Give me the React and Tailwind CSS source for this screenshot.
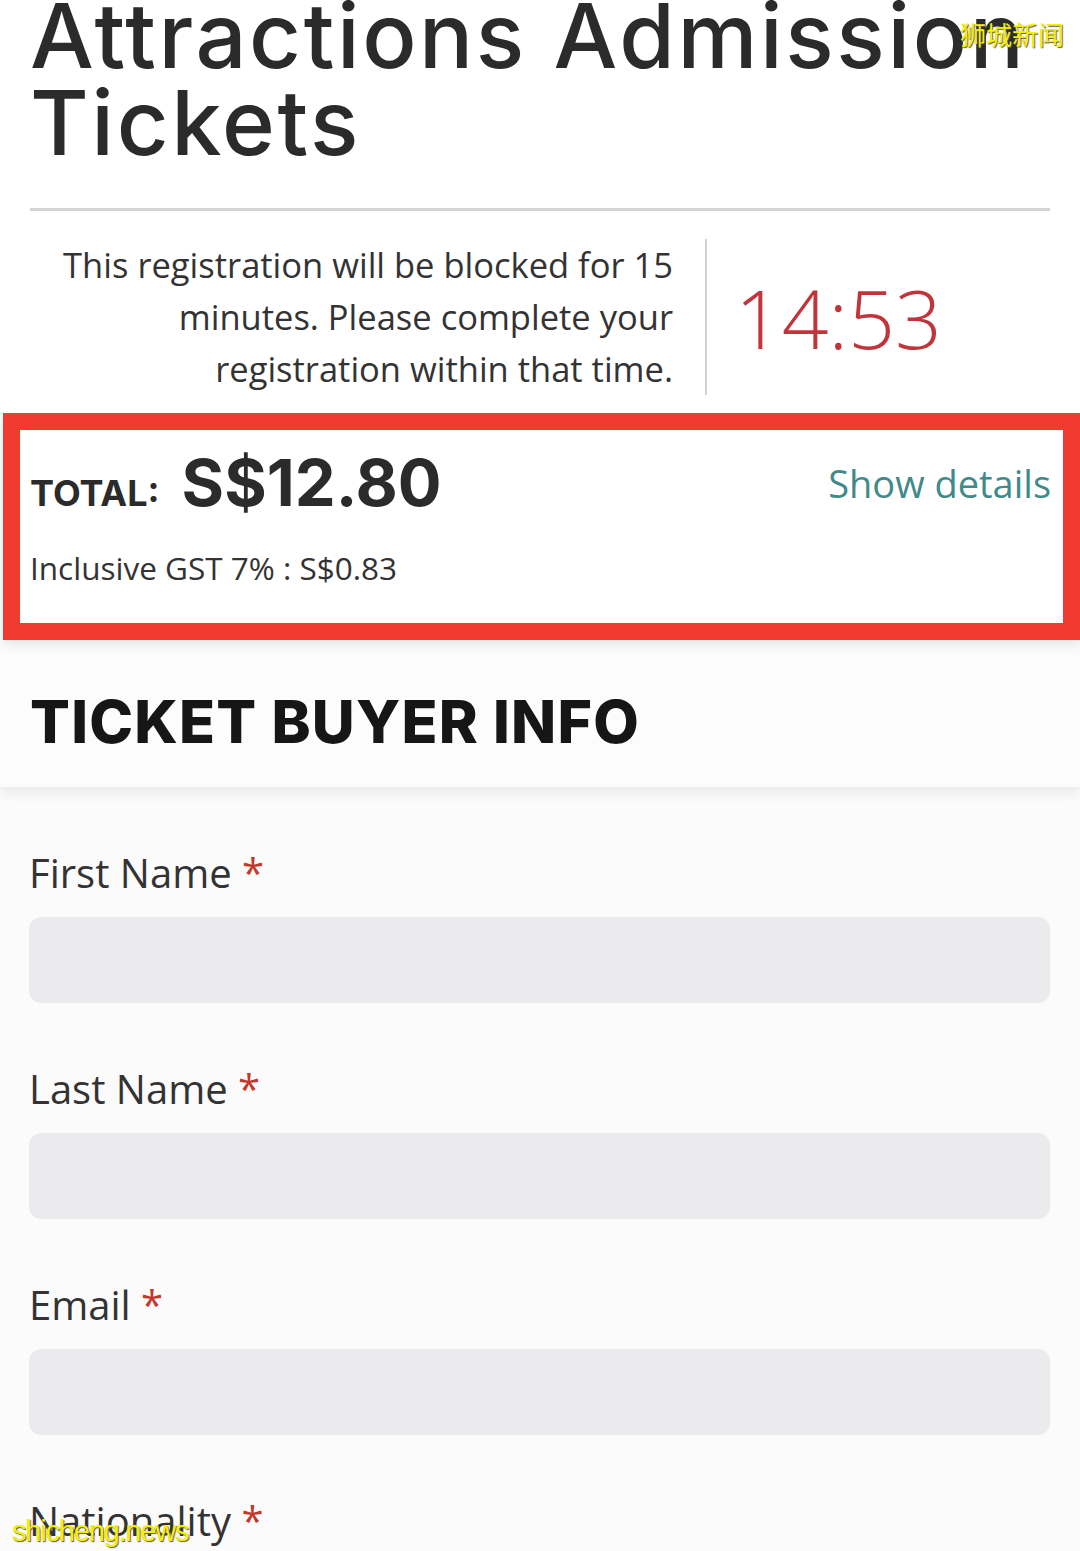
import React from 'react';

const heading = { fontFamily: 'Inter, "DejaVu Sans", sans-serif' };
const body = { fontFamily: '"Open Sans", "Liberation Sans", sans-serif' };

// Single form field: label with red asterisk and a grey input
const Field = ({ label }) => (
  <div className="pt-[60px]">
    <label className="block text-[40px] leading-[52px] text-[#333333] mb-[18px]">
      {label} <span className="text-[#c0392b]">*</span>
    </label>
    <div className="h-[86px] rounded-[12px] bg-[#ebeaec]"></div>
  </div>
);

export default function App() {
  return (
    <div className="relative w-[1080px] h-[1551px] overflow-hidden bg-[#fcfbfc]" style={body}>
      {/* Title block */}
      <div className="bg-white px-[30px]">
        <h1
          className="text-[90px] leading-[87px] font-medium text-[#2b2b2b] tracking-[2.6px] -mt-[8px] pb-[42px] border-b-[3px] border-[#d4d4d4]"
          style={heading}
        >
          Attractions Admission Tickets
        </h1>

        {/* Countdown */}
        <div className="flex items-center pt-[28px] pb-[18px]">
          <p className="w-[643px] text-right text-[34.5px] leading-[52px] text-[#333333]">
            This registration will be blocked for 15 minutes. Please complete your registration within that time.
          </p>
          <div className="ml-[32px] w-[2px] h-[156px] bg-[#d3d3d3]"></div>
          <div className="ml-[28px] text-[82px] font-light text-[#c0343a] leading-none">14:53</div>
        </div>
      </div>

      {/* Total box with red highlight */}
      <div className="ml-[3px] border-[17px] border-[#f23b30] bg-white h-[227px] relative z-10 shadow-[0_6px_10px_rgba(0,0,0,0.08)]">
        <div className="flex items-start justify-between pl-[10px] pr-[12px] pt-[13px]">
          <div className="flex items-baseline">
            <span className="text-[36px] font-bold text-[#2b2b2b]" style={heading}>TOTAL:</span>
            <span className="ml-[22px] text-[65px] leading-[80px] font-bold text-[#2b2b2b]" style={heading}>S$12.80</span>
          </div>
          <span className="mt-[12px] text-[38px] text-[#3f8a8a]">Show details</span>
        </div>
        <div className="pl-[10px] mt-[21px] text-[31.5px] text-[#333333]">Inclusive GST 7% : S$0.83</div>
      </div>

      {/* Section header */}
      <div className="bg-[#fdfcfd] px-[30px] h-[147px] flex items-center shadow-[0_6px_12px_rgba(0,0,0,0.07)] relative">
        <h2 className="text-[59px] font-extrabold tracking-[1.2px] text-[#161616] mt-[18px]" style={heading}>
          TICKET BUYER INFO
        </h2>
      </div>

      {/* Form */}
      <div className="pl-[29px] pr-[30px]">
        <Field label="First Name" />
        <Field label="Last Name" />
        <Field label="Email" />
        <Field label="Nationality" />
      </div>

      {/* Watermarks */}
      <div
        className="absolute top-[14px] left-[960px] text-[26px] text-[#f6f000]"
        style={{ fontFamily: '"Noto Sans CJK SC", sans-serif', textShadow: '1px 1px 1px #555' }}
      >
        狮城新闻
      </div>
      <div
        className="absolute top-[1510px] left-[12px] text-[29px] text-[#f6f000] tracking-[-1.2px]"
        style={{ fontFamily: '"Liberation Sans Narrow", "Liberation Sans", sans-serif', textShadow: '1px 1px 1px #555' }}
      >
        shicheng.news
      </div>
    </div>
  );
}
